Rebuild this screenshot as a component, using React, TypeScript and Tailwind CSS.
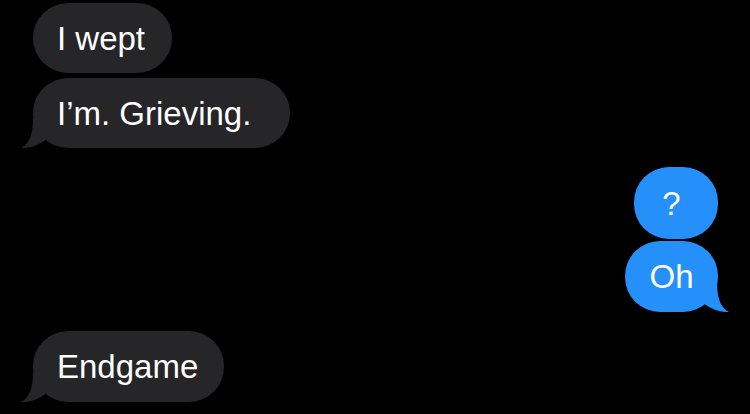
const Tail = ({ color, side }: { color: string; side: "left" | "right" }) => (
  <svg
    width="30"
    height="30"
    viewBox="0 0 30 30"
    className={`absolute bottom-0 ${side === "left" ? "left-[-12px]" : "right-[-11px] -scale-x-100"}`}
  >
    <path d="M12 0 C12 17 8 26 0 30 C8 30.5 16 28 24 22.5 L24 0 Z" fill={color} />
  </svg>
);

type Msg = { text: string; mine: boolean; w: string; h: string; mt: string; tail?: boolean; pad?: string };

const messages: Msg[] = [
  { text: "I wept", mine: false, w: "w-[139px]", h: "h-[70px]", mt: "mt-0" },
  { text: "I’m. Grieving.", mine: false, w: "w-[257px]", h: "h-[70px]", mt: "mt-[5px]", tail: true },
  { text: "?", mine: true, w: "w-[84px]", h: "h-[72px]", mt: "mt-[19px]", pad: "pr-[9px]" },
  { text: "Oh", mine: true, w: "w-[93px]", h: "h-[71px]", mt: "mt-[2px]", tail: true },
  { text: "Endgame", mine: false, w: "w-[191px]", h: "h-[71px]", mt: "mt-[19px]", tail: true },
];

export default function App() {
  return (
    <div
      className="w-[750px] h-[414px] bg-black overflow-hidden flex flex-col pt-[3px] pl-[33px] pr-[32px]"
      style={{ fontFamily: '"Liberation Sans", Arial, sans-serif' }}
    >
      {messages.map((m, i) => (
        <div key={i} className={`flex ${m.mine ? "justify-end" : "justify-start"} ${m.mt}`}>
          <div
            className={`relative ${m.w} ${m.h} rounded-[35px] flex items-center text-white text-[33px] leading-none ${
              m.mine ? "bg-[#2590fa] justify-center" : "bg-[#262628] pl-[24px]"
            } ${m.pad ?? ""}`}
          >
            {m.tail && <Tail color={m.mine ? "#2590fa" : "#262628"} side={m.mine ? "right" : "left"} />}
            <span className="relative">{m.text}</span>
          </div>
        </div>
      ))}
    </div>
  );
}
